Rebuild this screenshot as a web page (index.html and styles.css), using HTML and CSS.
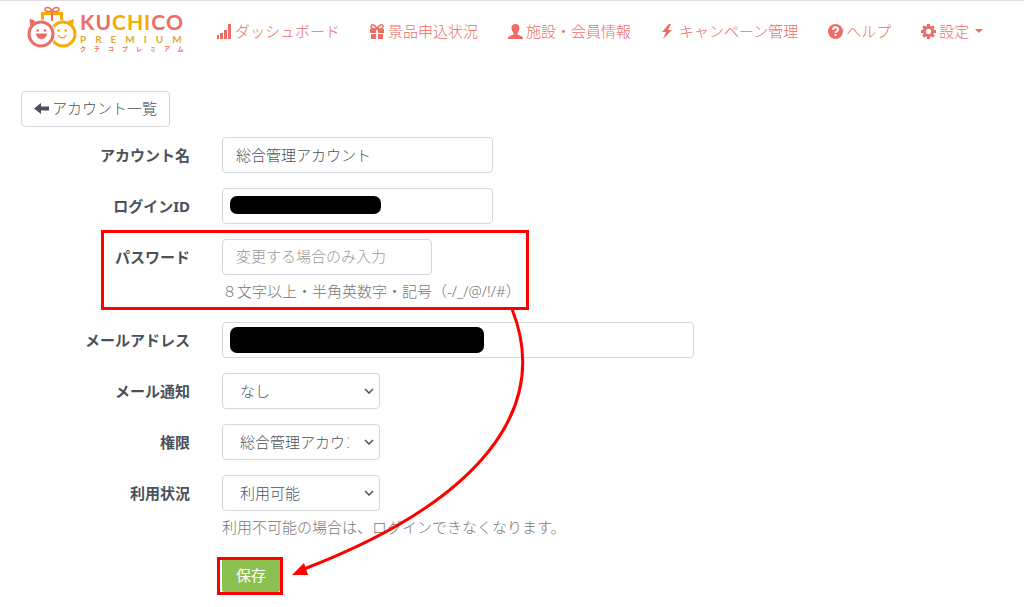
FILE: index.html
```html
<!DOCTYPE html>
<html lang="ja">

<head>
    <meta charset="UTF-8">
    <title>アカウント編集</title>
    <link rel="stylesheet" href="styles.css">
</head>

<body>

    <header class="header">
        <a class="logo" href="#">
            <svg class="logo-mark" width="50" height="50" viewBox="0 0 50 50" fill="none" stroke-width="3">
                <path d="M15.500 14V7.500h19V14" stroke="#f5ab00" />
                <path d="M41 15l6-2-1 7z" fill="#f5ab00" />
                <circle cx="36" cy="28" r="12" stroke="#f5ab00" />
                <path d="M9 15l-6-2 1 7z" fill="#ed6d65" />
                <circle cx="14" cy="28" r="14.500" fill="#fff" />
                <circle cx="14" cy="28" r="12" stroke="#ed6d65" />
                <path d="M3 20L2.500 13 9 16z" fill="#ed6d65" />
                <path d="M25 15V5" stroke="#ed6d65" stroke-width="2" />
                <path d="M25 5c-2-5-8-4-7-1 .5 1.500 4 1.500 7 1 3 .5 6.500.5 7-1 1-3-5-4-7 1" stroke="#ed6d65" stroke-width="1.500" />
                <path d="M9 27.500h11c-.5 7.500-10.500 7.500-11 0z" fill="#ed6d65" />
                <path d="M31.500 29.500c1.500 3 6 3 7.500 0" stroke="#f5ab00" stroke-width="1.500" stroke-linecap="round" />
                <g fill="#ed6d65"><circle cx="10.700" cy="24.500" r="1.300" /><circle cx="18" cy="24.500" r="1.300" /></g>
                <g fill="#f5ab00"><circle cx="31.500" cy="24.500" r="1.300" /><circle cx="38.700" cy="24.500" r="1.300" /></g>
            </svg>
            <span class="logo-text">
                <span class="logo-name">KU<span class="gold">CHI</span>CO</span>
                <span class="logo-sub">PREMIUM</span>
                <span class="logo-kana">クチコプレミアム</span>
            </span>
        </a>
        <nav class="nav">
            <a href="#">
                <svg class="icon" viewBox="0 0 15 15"><path d="M0 11h2v4H0zM3 9h3v6H3zM7 6h3v9H7zM11 0h3v15h-3z" /></svg>
                ダッシュボード
            </a>
            <a href="#">
                <svg class="icon" viewBox="0 0 15 15"><path d="M1 10h5v5H1zM8 10h5v5H8zM0 5h6v4H0zM8 5h6v4H8z" /><path d="M7 5C5 0 1 0 1 2.500S5 5 7 5s6 0 6-2.500S9 0 7 5z" fill="none" stroke="currentColor" stroke-width="1.500" /></svg>
                景品申込状況
            </a>
            <a href="#">
                <svg class="icon" viewBox="0 0 15 15"><path d="M7.500 0C5 0 3.500 1.500 3.500 4c0 2 1 4 2 5v1.500L1 12.500c-1 .5-1 1.500-1 2.500h15c0-1 0-2-1-2.500l-4.500-2V9c1-1 2-3 2-5 0-2.500-1.500-4-4-4z" /></svg>
                施設・会員情報
            </a>
            <a href="#">
                <svg class="icon" viewBox="0 0 15 15"><path d="M8 0 1 8h4l-3 7 9-9H7l3-6z" /></svg>
                キャンペーン管理
            </a>
            <a href="#">
                <svg class="icon" viewBox="0 0 15 15"><circle cx="7.500" cy="7.500" r="7.500" /><path d="M5 6c0-3.500 5-3.500 5-.5C10 7.500 7.500 7 7.500 9M7.500 10v2" fill="none" stroke="#fff" stroke-width="2" /></svg>
                ヘルプ
            </a>
            <a href="#">
                <svg class="icon" viewBox="0 0 15 15"><circle cx="7.500" cy="7.500" r="4.200" fill="none" stroke="currentColor" stroke-width="3" /><path d="M7.500 0v3M7.500 12v3M0 7.500h3M12 7.500h3M2.200 2.200l2 2M10.800 10.800l2 2M12.800 2.200l-2 2M4.200 10.800l-2 2" stroke="currentColor" stroke-width="3" /></svg>
                設定
                <span class="caret"></span>
            </a>
        </nav>
    </header>

    <main class="main">
        <button class="btn btn-back" type="button">
            <svg class="icon" viewBox="0 0 15 15"><path d="M0 7.500 7 2v3.500h8v4H7V13z" /></svg>
            アカウント一覧
        </button>

        <form class="form">
            <div class="row">
                <label for="name">アカウント名</label>
                <div class="field">
                    <input class="control w-name" id="name" type="text" value="総合管理アカウント">
                </div>
            </div>
            <div class="row">
                <label for="loginId">ログインID</label>
                <div class="field">
                    <input class="control w-name" id="loginId" type="text">
                    <span class="mask mask-id"></span>
                </div>
            </div>
            <div class="row">
                <label for="password">パスワード</label>
                <div class="field">
                    <input class="control w-pass" id="password" type="password" placeholder="変更する場合のみ入力">
                    <p class="help">８文字以上・半角英数字・記号（-/_/@/!/#）</p>
                </div>
            </div>
            <div class="row">
                <label for="mail">メールアドレス</label>
                <div class="field">
                    <input class="control w-mail" id="mail" type="email">
                    <span class="mask mask-mail"></span>
                </div>
            </div>
            <div class="row">
                <label for="notice">メール通知</label>
                <div class="field">
                    <select class="control w-select" id="notice">
                        <option>なし</option>
                    </select>
                </div>
            </div>
            <div class="row">
                <label for="role">権限</label>
                <div class="field">
                    <select class="control w-select" id="role">
                        <option>総合管理アカウント</option>
                    </select>
                </div>
            </div>
            <div class="row">
                <label for="status">利用状況</label>
                <div class="field">
                    <select class="control w-select" id="status">
                        <option>利用可能</option>
                    </select>
                    <p class="help">利用不可能の場合は、ログインできなくなります。</p>
                </div>
            </div>
            <div class="row">
                <div class="field field-offset">
                    <button class="btn btn-save" type="submit">保存</button>
                </div>
            </div>
        </form>
    </main>

    <!-- 操作手順の赤枠と矢印 -->
    <svg class="guide" width="560" height="607" viewBox="0 0 560 607" fill="none" stroke="#f00" stroke-width="3">
        <rect x="102.500" y="231.500" width="425" height="77" />
        <rect x="218.500" y="558.500" width="63" height="35" />
        <path d="M512 309C552 410 478 502 304 569" />
        <path d="M292 575l12-12 4 12z" fill="#f00" stroke="none" />
    </svg>

</body>

</html>
```

FILE: styles.css
```css
* {
    box-sizing: border-box;
}

body {
    margin: 0;
    border-top: 1px solid #ddd;
    background: #fff;
    color: #4b515a;
    font-family: "Noto Sans", "Noto Sans CJK JP", sans-serif;
    font-size: 15px;
    font-weight: 300;
    line-height: 20px;
}

.header {
    display: flex;
    align-items: center;
    height: 60px;
    padding-left: 27px;
}

.logo {
    display: flex;
    align-items: center;
    gap: 3px;
    width: 190px;
    color: #ed6d65;
    text-decoration: none;
}

.logo-text {
    display: flex;
    flex-direction: column;
    font-family: Lato, sans-serif;
    font-weight: 700;
    white-space: nowrap;
}

.logo-name {
    font-size: 21px;
    line-height: 23px;
    letter-spacing: 1px;
}

.logo-sub {
    color: #dcab35;
    font-size: 10px;
    line-height: 12px;
    letter-spacing: 9px;
}

.logo-kana {
    font-family: "Noto Sans CJK JP", sans-serif;
    font-size: 6px;
    line-height: 8px;
    letter-spacing: 8px;
}

.gold {
    color: #f5ab00;
}

.nav {
    display: flex;
    gap: 30px;
    white-space: nowrap;
}

.nav a {
    display: flex;
    align-items: center;
    gap: 3px;
    color: #ed6d65;
    text-decoration: none;
}

.icon {
    flex: none;
    width: 15px;
    height: 15px;
    fill: currentColor;
}

.caret {
    margin-left: 3px;
    border: 4px solid transparent;
    border-top-color: currentColor;
    border-bottom: 0;
}

.main {
    padding: 30px 21px 0;
}

.btn {
    border: 1px solid #d3d7de;
    border-radius: 4px;
    background: #fff;
    color: inherit;
    font: inherit;
}

.btn-back {
    display: flex;
    align-items: center;
    gap: 3px;
    height: 36px;
    padding: 0 12px 2px;
}

.form {
    display: flex;
    flex-direction: column;
    gap: 15px;
    padding-top: 10px;
}

.row {
    display: flex;
    gap: 32px;
}

.row label {
    width: 169px;
    line-height: 36px;
    font-weight: 700;
    text-align: right;
}

.field {
    position: relative;
}

.field-offset {
    margin-left: 201px;
}

.control {
    display: block;
    height: 36px;
    padding: 0 13px 2px;
    border: 1px solid #d3d7de;
    border-radius: 4px;
    background: #fff;
    color: inherit;
    font: inherit;
}

.control::placeholder {
    color: #999;
}

.w-name {
    width: 271px;
}

.w-pass {
    width: 210px;
}

.w-mail {
    width: 472px;
}

.w-select {
    width: 158px;
    padding: 0 30px 0 17px;
    appearance: none;
    background: #fff url("data:image/svg+xml,%3Csvg xmlns='http://www.w3.org/2000/svg' width='10' height='6' fill='none' stroke='%234b515a' stroke-width='1.500'%3E%3Cpath d='M1 1l4 4 4-4'/%3E%3C/svg%3E") no-repeat right 5px center;
}

.help {
    margin: 0;
    padding-top: 6px;
    height: 32px;
    color: #777;
    white-space: nowrap;
}

.mask {
    position: absolute;
    left: 8px;
    border-radius: 7px;
    background: #000;
}

.mask-id {
    top: 8px;
    width: 151px;
    height: 18px;
}

.mask-mail {
    top: 5px;
    width: 254px;
    height: 26px;
}

.btn-save {
    height: 34px;
    padding: 0 13px;
    border-color: #8cc152;
    border-radius: 2px;
    background: #8cc152;
    color: #fff;
    font-weight: 400;
}

.guide {
    position: absolute;
    top: 0;
    left: 0;
    pointer-events: none;
}
```
